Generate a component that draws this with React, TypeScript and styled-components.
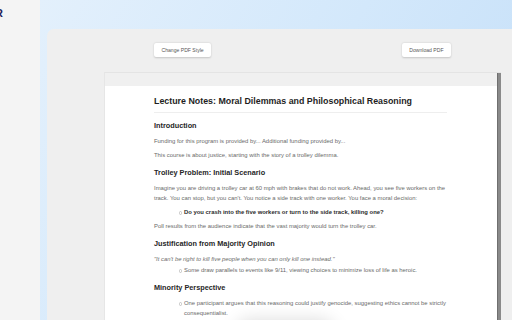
import styled, { createGlobalStyle } from "styled-components";

const GlobalStyle = createGlobalStyle`
  html, body {
    margin: 0;
    padding: 0;
    height: 100%;
    overflow: hidden;
    font-family: "Liberation Sans", Arial, sans-serif;
  }
  #root {
    height: 100%;
  }
`;

const Shell = styled.div`
  display: flex;
  width: 512px;
  height: 320px;
  overflow: hidden;
`;

const Sidebar = styled.aside`
  width: 40px;
  flex-shrink: 0;
  background: #f4f4f4;
  overflow: hidden;
  padding-top: 6px;
  box-sizing: border-box;
`;

const Logo = styled.div`
  margin-left: -5px;
  font-size: 11px;
  font-weight: 700;
  line-height: 14px;
  color: #23235b;
`;

const Main = styled.main`
  flex: 1;
  display: flex;
  padding: 29px 0 0 7px;
  background: linear-gradient(120deg, #e3f0fc 0%, #d3e8fb 50%, #c3def8 100%);
  min-width: 0;
`;

const Panel = styled.section`
  flex: 1;
  display: flex;
  flex-direction: column;
  gap: 15px;
  padding: 14px 11px 0 57px;
  background: #efefef;
  border-top-left-radius: 7px;
  min-width: 0;
`;

const Toolbar = styled.div`
  display: flex;
  justify-content: space-between;
  align-items: center;
  margin: 0 50px;
`;

const ToolButton = styled.button`
  height: 14px;
  padding: 0 7.5px;
  border: none;
  border-radius: 2px;
  background: #ffffff;
  box-shadow: 0 0.5px 2px rgba(0, 0, 0, 0.18);
  font-family: "Liberation Sans", Arial, sans-serif;
  font-size: 5.1px;
  color: #555;
  cursor: pointer;
`;

const Frame = styled.div`
  flex: 1;
  display: flex;
  border-top: 1px solid #e4e4e4;
  border-left: 1px solid #e6e6e6;
  min-height: 0;
`;

const FrameColumn = styled.div`
  flex: 1;
  display: flex;
  flex-direction: column;
  min-width: 0;
`;

const FrameBand = styled.div`
  height: 13px;
  background: #f0f0f0;
`;

const Page = styled.article`
  flex: 1;
  background: #ffffff;
  padding: 10px 50px 0 49px;
  overflow: hidden;
`;

const Scrollbar = styled.div`
  width: 3px;
  background: #8a8a8a;
  border-left: 0.5px solid #6f6f6f;
`;

const Title = styled.h1`
  margin: 0 0 8px;
  padding-bottom: 6px;
  border-bottom: 1px solid #eeeeee;
  font-size: 8.85px;
  line-height: 10px;
  font-weight: 700;
  color: #1e1e1e;
`;

const Heading = styled.h2`
  margin: 8px 0 5px;
  font-size: 7.3px;
  line-height: 10px;
  font-weight: 700;
  color: #262626;
`;

const Para = styled.p<{ $quote?: boolean }>`
  margin: 0 0 ${(p) => (p.$quote ? "1px" : "4px")};
  font-size: 5.9px;
  line-height: 10px;
  color: #6a6a6a;
  font-style: ${(p) => (p.$quote ? "italic" : "normal")};
`;

const List = styled.ul`
  margin: 0 0 4px;
  padding-left: 30px;
  list-style: none;
`;

const Item = styled.li<{ $strong?: boolean }>`
  position: relative;
  font-size: 5.9px;
  line-height: 10px;
  color: ${(p) => (p.$strong ? "#2b2b2b" : "#6a6a6a")};
  font-weight: ${(p) => (p.$strong ? 700 : 400)};
  &::before {
    content: "";
    position: absolute;
    left: -5.5px;
    top: 4.2px;
    width: 1.6px;
    height: 1.6px;
    border: 0.5px solid #c4c4c4;
    border-radius: 50%;
  }
`;

const FloatShadow = styled.div`
  position: fixed;
  left: 235px;
  bottom: -30px;
  width: 100px;
  height: 30px;
  border-radius: 15px;
  background: #ffffff;
  box-shadow: 0 0 18px rgba(0, 0, 0, 0.14);
`;

export default function App() {
  return (
    <>
      <GlobalStyle />
      <Shell>
        <Sidebar>
          <Logo>R</Logo>
        </Sidebar>
        <Main>
          <Panel>
            <Toolbar>
              <ToolButton>Change PDF Style</ToolButton>
              <ToolButton>Download PDF</ToolButton>
            </Toolbar>
            <Frame>
              <FrameColumn>
                <FrameBand />
                <Page>
                  <Title>Lecture Notes: Moral Dilemmas and Philosophical Reasoning</Title>

                  <Heading>Introduction</Heading>
                  <Para>Funding for this program is provided by... Additional funding provided by...</Para>
                  <Para>This course is about justice, starting with the story of a trolley dilemma.</Para>

                  <Heading>Trolley Problem: Initial Scenario</Heading>
                  <Para>
                    Imagine you are driving a trolley car at 60 mph with brakes that do not work. Ahead, you see five
                    workers on the track. You can stop, but you can't. You notice a side track with one worker. You face a
                    moral decision:
                  </Para>
                  <List>
                    <Item $strong>Do you crash into the five workers or turn to the side track, killing one?</Item>
                  </List>
                  <Para>Poll results from the audience indicate that the vast majority would turn the trolley car.</Para>

                  <Heading>Justification from Majority Opinion</Heading>
                  <Para $quote>"It can't be right to kill five people when you can only kill one instead."</Para>
                  <List>
                    <Item>Some draw parallels to events like 9/11, viewing choices to minimize loss of life as heroic.</Item>
                  </List>

                  <Heading>Minority Perspective</Heading>
                  <List>
                    <Item>
                      One participant argues that this reasoning could justify genocide, suggesting ethics cannot be
                      strictly consequentialist.
                    </Item>
                  </List>
                </Page>
              </FrameColumn>
              <Scrollbar />
            </Frame>
          </Panel>
        </Main>
      </Shell>
      <FloatShadow />
    </>
  );
}
